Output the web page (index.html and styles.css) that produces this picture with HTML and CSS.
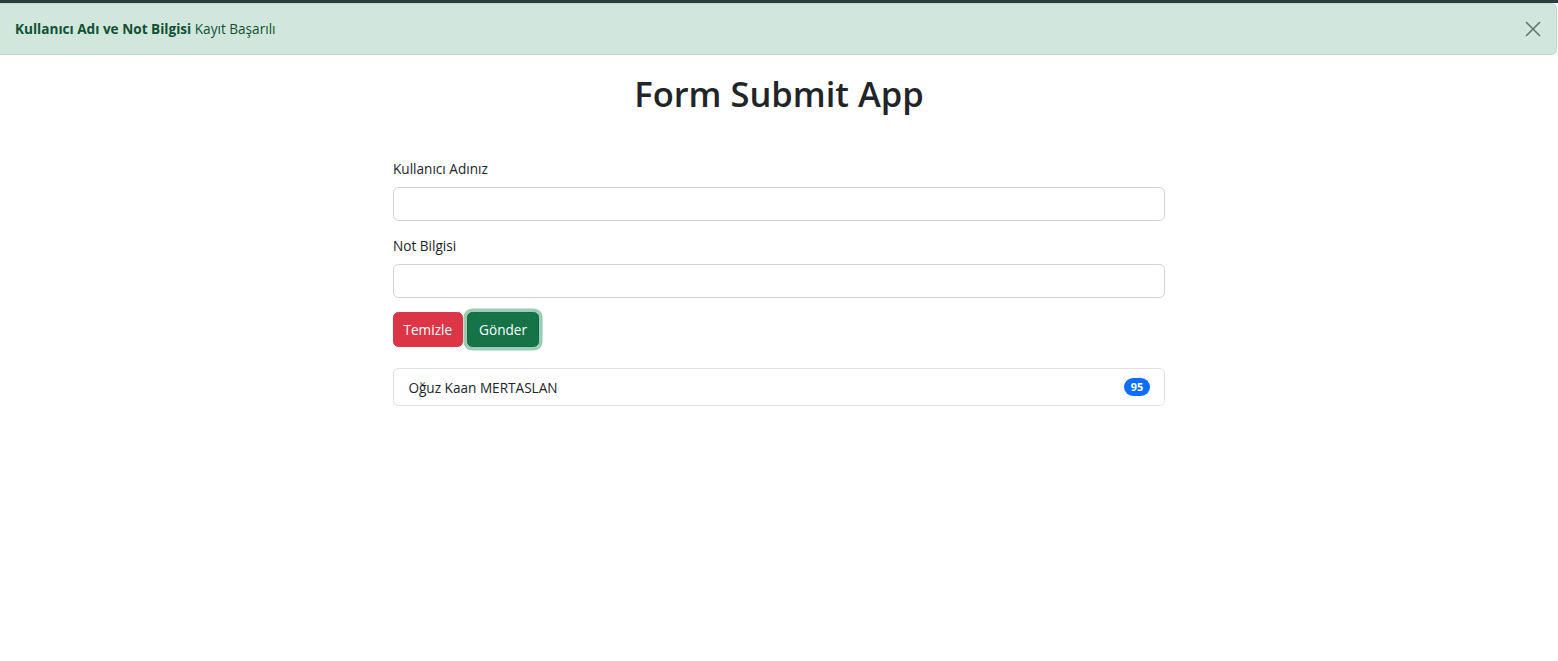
FILE: index.html
```html
<!DOCTYPE html>
<html lang="tr">
<head>
<meta charset="utf-8">
<title>Form Submit App</title>
<link rel="stylesheet" href="styles.css">
</head>
<body>
<div class="topbar"></div>
<div class="alert" role="alert">
  <span><strong>Kullanıcı Adı ve Not Bilgisi</strong> Kayıt Başarılı</span>
  <button class="btn-close" type="button" aria-label="Close">
    <svg viewBox="0 0 16 16" width="16" height="16"><path d="M1 1 L15 15 M15 1 L1 15" stroke="currentColor" stroke-width="1.6" fill="none"/></svg>
  </button>
</div>
<main class="container">
  <h1 class="title">Form Submit App</h1>
  <form class="form">
    <div class="field">
      <label class="label" for="user">Kullanıcı Adınız</label>
      <input class="input" id="user" type="text">
    </div>
    <div class="field">
      <label class="label" for="note">Not Bilgisi</label>
      <input class="input" id="note" type="text">
    </div>
    <div class="actions">
      <button type="reset" class="btn btn-danger">Temizle</button>
      <button type="button" class="btn btn-success">Gönder</button>
    </div>
  </form>
  <ul class="list">
    <li class="list-item"><span>Oğuz Kaan MERTASLAN</span><span class="badge">95</span></li>
  </ul>
</main>
</body>
</html>
```
FILE: styles.css
```css
* { box-sizing: border-box; }
body {
  margin: 0;
  font-family: "Open Sans", "Noto Sans", sans-serif;
  font-size: 13.6px;
  line-height: 21.6px;
  color: #212529;
  background: #fff;
}
.topbar {
  height: 3px;
  background: #2d3b40;
}
.alert {
  display: flex;
  align-items: center;
  justify-content: space-between;
  height: 52px;
  margin: 0 1px 0 -6px;
  padding: 0 14px 0 20px;
  background: #d1e7dd;
  border: 1px solid #badbcc;
  border-radius: 5.4px;
  color: #0f5132;
}
.alert strong { font-weight: 700; }
.btn-close {
  display: flex;
  border: 0;
  background: transparent;
  padding: 0;
  margin-right: 1px;
  color: #66766f;
  cursor: pointer;
}
.container {
  width: 772px;
  margin: 0 auto;
}
.title {
  margin: 17px 0 0;
  font-size: 34.5px;
  line-height: 43px;
  font-weight: 600;
  text-align: center;
}
.form {
  margin-top: 43px;
}
.field {
  margin-bottom: 14.4px;
}
.label {
  display: block;
  margin-bottom: 7.2px;
}
.input {
  display: block;
  width: 100%;
  height: 34px;
  border: 1px solid #ced4da;
  border-radius: 5.4px;
  font: inherit;
  padding: 5px 11px;
}
.actions {
  display: flex;
  gap: 4px;
}
.btn {
  height: 35px;
  padding: 0 9.5px;
  border: 1px solid transparent;
  border-radius: 5.4px;
  font: inherit;
  color: #fff;
}
.btn-danger { background: #dc3545; border-color: #dc3545; }
.btn-success {
  padding: 0 11.5px;
  background: #157347;
  border-color: #146c43;
  box-shadow: 0 0 0 3.6px rgba(60, 153, 110, 0.5);
}
.list {
  list-style: none;
  margin: 21px 0 0;
  padding: 0;
}
.list-item {
  display: flex;
  justify-content: space-between;
  align-items: center;
  height: 38px;
  padding: 0 14.4px;
  border: 1px solid #dfdfdf;
  border-radius: 5.4px;
}
.badge {
  background: #0d6efd;
  color: #fff;
  font-size: 10.8px;
  line-height: 1;
  font-weight: 700;
  padding: 3.5px 6.5px;
  border-radius: 9px;
}
```
